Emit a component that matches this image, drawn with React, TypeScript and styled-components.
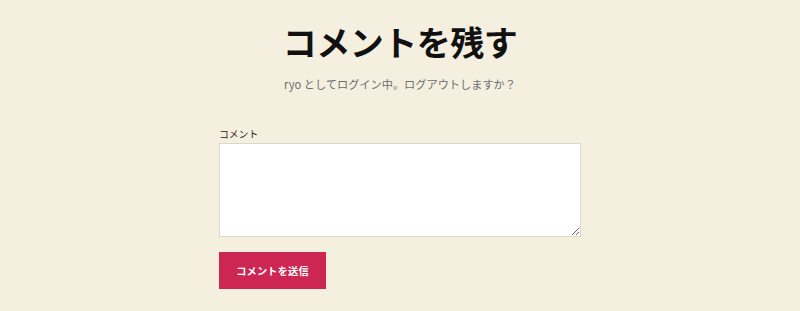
import React from "react";
import styled, { createGlobalStyle } from "styled-components";

const Global = createGlobalStyle`
  html, body { margin: 0; padding: 0; background: #f5efe0; }
  body { font-family: "Noto Sans CJK JP", "Noto Sans", sans-serif; color: #000; }
`;

const Page = styled.div`
  width: 800px;
  height: 311px;
  background: #f5efe0;
  display: flex;
  flex-direction: column;
  align-items: center;
  box-sizing: border-box;
  padding-top: 18px;
  overflow: hidden;
`;

const Title = styled.h2`
  margin: 0;
  font-size: 34px;
  line-height: 48px;
  font-weight: 700;
  letter-spacing: -0.5px;
  color: #111;
`;

const Logged = styled.p`
  margin: 10px 0 0;
  font-size: 11.2px;
  line-height: 16px;
  color: #6d6d6d;
`;

const Form = styled.form`
  width: 362px;
  margin-top: 36px;
  display: flex;
  flex-direction: column;
  align-items: flex-start;
`;

const Label = styled.label`
  font-size: 9.8px;
  line-height: 12px;
  color: #222;
  margin-bottom: 3px;
`;

const TextArea = styled.textarea`
  width: 362px;
  height: 94px;
  box-sizing: border-box;
  background: #fff;
  border: 1px solid #dcd7ca;
  border-radius: 0;
  margin: 0;
  padding: 6px;
  font-family: inherit;
`;

const Submit = styled.button`
  margin-top: 15px;
  width: 107px;
  height: 37px;
  background: #cd2653;
  color: #fff;
  border: none;
  border-radius: 0;
  font-family: "Noto Sans CJK JP", sans-serif;
  font-weight: 700;
  font-size: 10.2px;
  letter-spacing: 0.2px;
  padding: 0;
  cursor: pointer;
`;

export default function App() {
  return (
    <>
      <Global />
      <Page>
        <Title>コメントを残す</Title>
        <Logged>ryo としてログイン中。ログアウトしますか？</Logged>
        <Form onSubmit={(e) => e.preventDefault()}>
          <Label htmlFor="comment">コメント</Label>
          <TextArea id="comment" />
          <Submit type="submit">コメントを送信</Submit>
        </Form>
      </Page>
    </>
  );
}
